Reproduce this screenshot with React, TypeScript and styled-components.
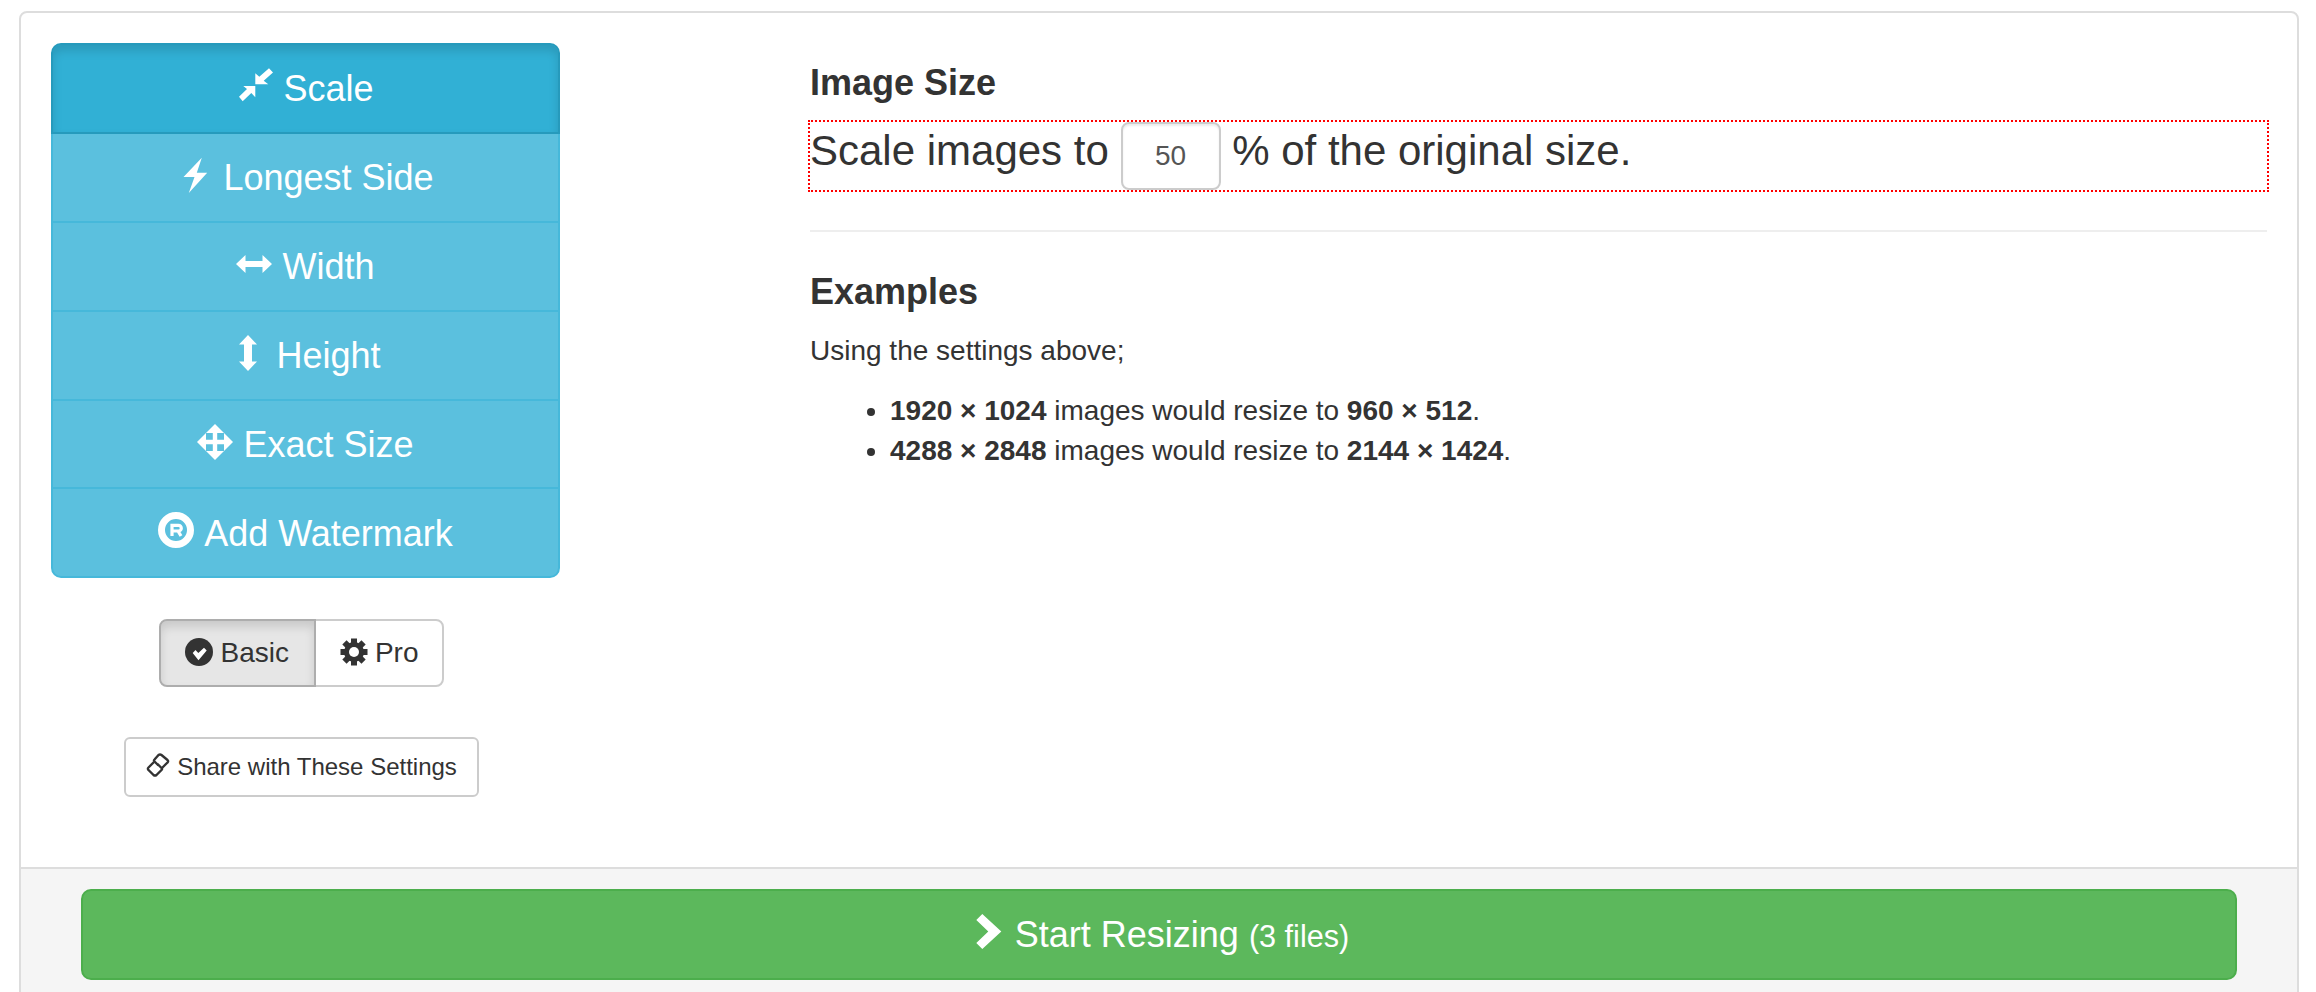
import React from "react";
import styled, { createGlobalStyle } from "styled-components";

const Global = createGlobalStyle`
  html, body { margin: 0; padding: 0; height: 992px; overflow: hidden; background: #fff; }
  body { font-family: "Liberation Sans", Arial, sans-serif; font-size: 28px; line-height: 40px; color: #333; }
  * { box-sizing: border-box; }
`;

const Panel = styled.div`
  margin: 11px 17px 0 19px;
  border: 2px solid #ddd;
  border-radius: 8px;
  background: #fff;
`;
const PanelBody = styled.div`
  display: flex;
  height: 854px;
  padding: 30px 30px 0;
`;
const LeftColumn = styled.div`
  width: 509px;
  flex: none;
  display: flex;
  flex-direction: column;
`;
const RightColumn = styled.div`
  flex: 1;
  margin-left: 250px;
  min-width: 0;
`;
const ModeList = styled.div`
  display: flex;
  flex-direction: column;
`;
const ModeItem = styled.div<{ $active?: boolean }>`
  display: flex;
  align-items: center;
  justify-content: center;
  gap: 10px;
  height: 90.9px;
  margin-top: -2px;
  padding: 20.5px 0 18.5px;
  font-size: 36px;
  line-height: 48px;
  color: #fff;
  background: ${(p) => (p.$active ? "#31b0d5" : "#5bc0de")};
  border: 2px solid ${(p) => (p.$active ? "#269abc" : "#46b8da")};
  box-shadow: ${(p) => (p.$active ? "inset 0 6px 10px rgba(0,0,0,.125)" : "none")};
  position: relative;
  z-index: ${(p) => (p.$active ? 1 : 0)};
  &:first-child { margin-top: 0; border-radius: 10px 10px 0 0; }
  &:last-child { border-radius: 0 0 10px 10px; }
`;
const ModeIcon = styled.svg`
  width: 36px;
  height: 36px;
  flex: none;
  margin-bottom: 7px;
  fill: #fff;
`;
const CenterRow = styled.div<{ $top: number }>`
  display: flex;
  justify-content: center;
  padding-right: 8px;
  margin-top: ${(p) => p.$top}px;
`;
const Toggle = styled.div<{ $active?: boolean; $right: number }>`
  display: flex;
  align-items: center;
  gap: 7px;
  height: 68px;
  padding: 0 ${(p) => p.$right}px 0 24px;
  border: 2px solid ${(p) => (p.$active ? "#adadad" : "#ccc")};
  background: ${(p) => (p.$active ? "#e6e6e6" : "#fff")};
  box-shadow: ${(p) => (p.$active ? "inset 0 6px 10px rgba(0,0,0,.125)" : "none")};
  border-radius: ${(p) => (p.$active ? "8px 0 0 8px" : "0 8px 8px 0")};
  margin-left: ${(p) => (p.$active ? 0 : -2)}px;
  position: relative;
  z-index: ${(p) => (p.$active ? 1 : 0)};
`;
const ToggleIcon = styled.svg`
  width: 28px;
  height: 28px;
  flex: none;
  margin-bottom: 3px;
  fill: #333;
`;
const ShareButton = styled.div`
  display: flex;
  align-items: center;
  gap: 7px;
  height: 60px;
  padding: 0 20px;
  border: 2px solid #ccc;
  border-radius: 6px;
  background: #fff;
  font-size: 24px;
  line-height: 36px;
`;
const ShareIcon = styled.svg`
  width: 24px;
  height: 24px;
  flex: none;
  margin-bottom: 4px;
`;
const Heading = styled.h4<{ $top: number }>`
  margin: ${(p) => p.$top}px 0 19px;
  font-size: 36px;
  line-height: 40px;
  font-weight: 700;
  color: #333;
`;
const ScaleLine = styled.div`
  font-size: 42px;
  line-height: 56px;
  outline: 2px dotted #f00;
`;
const PercentInput = styled.input`
  width: 100px;
  height: 68px;
  padding: 12px 24px;
  border: 2px solid #ccc;
  border-radius: 8px;
  font: 28px/40px "Liberation Sans", Arial, sans-serif;
  color: #555;
  text-align: center;
  background: #fff;
  box-shadow: inset 0 2px 2px rgba(0,0,0,.075);
  outline: none;
`;
const Rule = styled.hr`
  margin: 40px 0 40px;
  border: 0;
  border-top: 2px solid #eee;
`;
const Para = styled.p`
  margin: 0 0 20px;
`;
const List = styled.ul`
  margin: 0;
  padding: 0 0 0 80px;
`;
const Footer = styled.div`
  border-top: 2px solid #ddd;
  background: #f5f5f5;
  padding: 20px 60px;
`;
const StartButton = styled.div`
  display: flex;
  align-items: center;
  justify-content: center;
  gap: 10px;
  height: 91px;
  padding-top: 2px;
  border: 2px solid #4cae4c;
  border-radius: 10px;
  background: #5cb85c;
  color: #fff;
  font-size: 36px;
  line-height: 48px;
`;
const Small = styled.small`
  font-size: 30.6px;
`;

const ResizeSmall = () => (
  <ModeIcon viewBox="0 0 36 36">
    <path d="M18.300 16.300V5.300L22.300 8.700 32 .3 36 4.600 26.700 12.700 31.300 16.300z" />
    <path d="M18.300 18V29.300L14.300 25 5.700 33.300 2 28.700 10 21 6.300 18z" />
  </ModeIcon>
);
const Flash = () => (
  <ModeIcon viewBox="0 0 36 36">
    <path d="M24.800.7L6.500 20H17.500L11.800 36 30.200 15.700H19.800z" />
  </ModeIcon>
);
const ResizeHorizontal = () => (
  <ModeIcon viewBox="0 0 36 36">
    <path d="M0 18l9.500-9v6h17V9l9.500 9-9.500 9v-6h-17v6z" />
  </ModeIcon>
);
const ResizeVertical = () => (
  <ModeIcon viewBox="0 0 36 36">
    <path d="M18 0l9 9.500h-5v17h5L18 36l-9-9.500h5v-17H9z" />
  </ModeIcon>
);
const Move = () => (
  <ModeIcon viewBox="0 0 36 36">
    <path
      fillRule="evenodd"
      d="M18 0l18 18-18 18L0 18zM9 9v6.800H15.800V9zM20.200 9v6.800H27V9zM9 20.200V27H15.800V20.200zM20.200 20.200V27H27V20.200z"
    />
  </ModeIcon>
);
const Registered = () => (
  <ModeIcon viewBox="0 0 36 36">
    <circle cx="18" cy="18" r="14.500" fill="none" stroke="#fff" strokeWidth="7" />
    <path
      d="M14 24V13.400H20.500a2.800 2.800 0 0 1 0 5.600H14M20 19l3 5"
      fill="none"
      stroke="#fff"
      strokeWidth="3.200"
    />
  </ModeIcon>
);
const OkSign = () => (
  <ToggleIcon viewBox="0 0 28 28">
    <circle cx="14" cy="14" r="14" />
    <path d="M7.700 15L10.500 12 13.300 15 19 9.700 21.700 12.500 13.500 22.300z" fill="#fff" />
  </ToggleIcon>
);
const Cog = () => (
  <ToggleIcon viewBox="0 0 28 28">
    <circle cx="14" cy="14" r="10" />
    {[0, 45, 90, 135].map((a) => (
      <rect key={a} x="11" y="0.500" width="6" height="27" transform={`rotate(${a} 14 14)`} />
    ))}
    <circle cx="14" cy="14" r="5" fill="#fff" />
  </ToggleIcon>
);
const LinkIcon = () => (
  <ShareIcon viewBox="0 0 24 24" fill="none" stroke="#333" strokeWidth="2.400" strokeLinejoin="round">
    <path d="M12.500 12.500L8.500 8.500Q7.500 7.500 8.500 6.500L12.500 2Q14 .8 15.500 2L21.500 7Q22.800 8.300 21.500 9.500L15.500 15.500" />
    <path d="M11.500 11L15.500 15Q16.500 16 15.500 17L10.500 22Q9 23.200 7.500 22L2.500 17Q1.200 15.800 2.500 14.500L8 9" />
  </ShareIcon>
);
const Chevron = () => (
  <ModeIcon viewBox="0 0 36 36">
    <path d="M7.300 6l6-6 19 17.600L13.300 35l-6-6 12-11.400z" />
  </ModeIcon>
);

const modes: { label: string; icon: React.ReactNode }[] = [
  { label: "Scale", icon: <ResizeSmall /> },
  { label: "Longest Side", icon: <Flash /> },
  { label: "Width", icon: <ResizeHorizontal /> },
  { label: "Height", icon: <ResizeVertical /> },
  { label: "Exact Size", icon: <Move /> },
  { label: "Add Watermark", icon: <Registered /> },
];

export default function App() {
  return (
    <>
      <Global />
      <Panel>
        <PanelBody>
          <LeftColumn>
            <ModeList>
              {modes.map((m, i) => (
                <ModeItem key={m.label} $active={i === 0}>
                  {m.icon}
                  <span>{m.label}</span>
                </ModeItem>
              ))}
            </ModeList>
            <CenterRow $top={41}>
              <Toggle $active $right={25}>
                <OkSign />
                <span>Basic</span>
              </Toggle>
              <Toggle $right={23}>
                <Cog />
                <span>Pro</span>
              </Toggle>
            </CenterRow>
            <CenterRow $top={50}>
              <ShareButton>
                <LinkIcon />
                <span>Share with These Settings</span>
              </ShareButton>
            </CenterRow>
          </LeftColumn>
          <RightColumn>
            <Heading $top={20}>Image Size</Heading>
            <ScaleLine>
              Scale images to <PercentInput defaultValue="50" /> % of the original size.
            </ScaleLine>
            <Rule />
            <Heading $top={0}>Examples</Heading>
            <Para>Using the settings above;</Para>
            <List>
              <li>
                <b>1920 × 1024</b> images would resize to <b>960 × 512</b>.
              </li>
              <li>
                <b>4288 × 2848</b> images would resize to <b>2144 × 1424</b>.
              </li>
            </List>
          </RightColumn>
        </PanelBody>
        <Footer>
          <StartButton>
            <Chevron />
            <span>
              Start Resizing <Small>(3 files)</Small>
            </span>
          </StartButton>
        </Footer>
      </Panel>
    </>
  );
}
